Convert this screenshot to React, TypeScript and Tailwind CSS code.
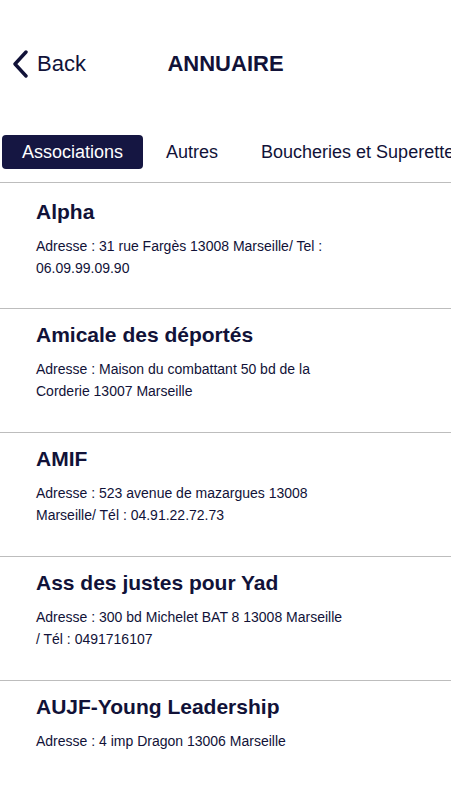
import React from "react";

const items = [
  { name: "Alpha", addr: "Adresse : 31 rue Fargès 13008 Marseille/ Tel : 06.09.99.09.90" },
  { name: "Amicale des déportés", addr: "Adresse : Maison du combattant 50 bd de la Corderie 13007 Marseille" },
  { name: "AMIF", addr: "Adresse : 523 avenue de mazargues 13008 Marseille/ Tél : 04.91.22.72.73" },
  { name: "Ass des justes pour Yad", addr: "Adresse : 300 bd Michelet BAT 8 13008 Marseille / Tél : 0491716107" },
  { name: "AUJF-Young Leadership", addr: "Adresse : 4 imp Dragon 13006 Marseille" },
];

export default function App() {
  return (
    <div
      className="w-[451px] h-[800px] overflow-hidden bg-white text-[#111238]"
      style={{ fontFamily: '"Liberation Sans", Arial, sans-serif' }}
    >
      <div className="relative h-[128px]">
        <div className="absolute left-[12px] top-[50px] flex items-center gap-[7px]">
          <svg width="18" height="28" viewBox="0 0 18 28" fill="none">
            <path d="M14 2 L3 14 L14 26" stroke="#111238" strokeWidth="3.4" strokeLinecap="round" strokeLinejoin="round" />
          </svg>
          <span className="text-[22px] leading-[28px]">Back</span>
        </div>
        <div className="absolute left-0 right-0 top-[50px] flex justify-center">
          <span className="text-[22px] leading-[28px] font-bold">ANNUAIRE</span>
        </div>
      </div>
      <div className="flex items-center h-[48px] pl-[2px] whitespace-nowrap overflow-hidden border-b-[1.5px] border-[#bdbdbd] pb-[6px] box-content">
        <div className="h-[34px] w-[141px] flex items-center justify-center rounded-[4px] bg-[#151642] text-white text-[18px] shrink-0">
          Associations
        </div>
        <div className="ml-[23px] text-[18px] shrink-0">Autres</div>
        <div className="ml-[43px] text-[18px] shrink-0">Boucheries et Superettes</div>
      </div>
      <div>
        {items.map((it, i) => (
          <div key={i} className={`h-[124px] border-b-[1.5px] border-[#bdbdbd] pl-[36px] ${i === 0 ? "pt-[17px] h-[126px]" : "pt-[14px]"}`}>
            <div className="text-[21px] leading-[24px] font-bold">{it.name}</div>
            <div className="mt-[11px] text-[14px] leading-[22px] max-w-[313px]">{it.addr}</div>
          </div>
        ))}
      </div>
    </div>
  );
}
